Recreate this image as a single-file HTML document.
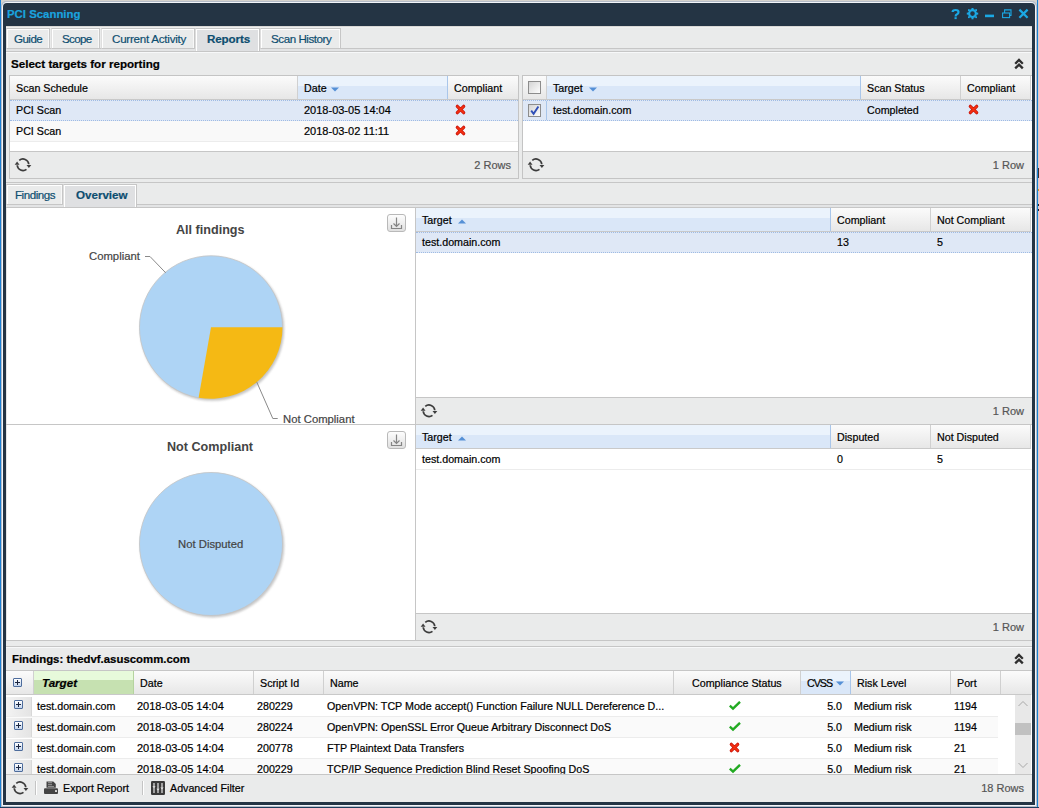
<!DOCTYPE html>
<html><head><meta charset="utf-8">
<style>
*{box-sizing:border-box;margin:0;padding:0}
html,body{width:1039px;height:808px;overflow:hidden;background:#d8d6d2;font-family:"Liberation Sans",sans-serif;font-size:10.7px;color:#000;-webkit-text-stroke:0.2px currentColor}
.a{position:absolute}
.t{position:absolute;white-space:nowrap;line-height:13px}
.tab{position:absolute;background:#eaebeb;border:1px solid #c6c6c6;border-bottom:none;box-shadow:inset 1px 1px 0 #fff,inset -1px 0 0 #f8f8f8;border-left-color:#dedede;color:#0d4e70;font-size:11px}
.tab span{position:absolute;top:3px;white-space:nowrap;line-height:13px;font-size:11.6px}
.tab.act{background:#dfe0e2;font-weight:bold;box-shadow:inset 1px 1px 0 #fff,inset -1px 0 0 #fff}
.hc{position:absolute;height:24px;background:linear-gradient(#fbfbfb,#e6e6e6)}
.hc span{position:absolute;top:6px;white-space:nowrap;line-height:13px}
.hc.sort{background:linear-gradient(#ebf3fc 0,#ebf3fc 42%,#dae7f8 42%,#dae7f8 100%)}
.vb{position:absolute;width:1px;background:#d0d0d0}
.vbs{position:absolute;width:1px;background:#a9c6ea}
.sel{position:absolute;background:#dfe8f6;border-top:1px dotted #9fbbe4;border-bottom:1px dotted #9fbbe4}
.ln{position:absolute;background:#c6c6c6}
.ftxt{position:absolute;white-space:nowrap;line-height:13px;color:#555;width:100px;text-align:right;font-size:11px}
</style></head><body>

<div class="a" style="left:0;top:0;width:1039px;height:808px;background:#d5d2cd"></div>
<div class="a" style="left:0;top:0;width:1px;height:808px;background:#1a7fd4"></div>
<div class="a" style="left:1037px;top:0;width:1px;height:808px;background:#1a7fd4"></div>
<div class="a" style="left:1px;top:1px;width:1036px;height:806px;background:#b4bcc8;border-radius:5px 5px 0 0"></div>
<div class="a" style="left:2px;top:2px;width:1034px;height:804px;background:#f2f5fa;border-radius:5px 5px 0 0"></div>
<div class="a" style="left:0;top:807px;width:1039px;height:1px;background:#1f3d5c"></div>
<div class="a" style="left:3px;top:3px;width:1032px;height:802px;background:#243444;border-radius:4px 4px 0 0"></div>
<div class="t" style="left:7px;top:8px;color:#1aa3df;font-weight:bold;font-size:11.4px">PCI Scanning</div>
<svg width="90" height="14" style="position:absolute;left:948px;top:7px" viewBox="0 0 90 14">
<g fill="none" stroke="#1ba8e4" stroke-width="2.2"><path d="M4.6 5Q4.6 3 7.6 3Q10.5 3 10.5 5Q10.5 6.5 9 7.2Q7.6 7.8 7.6 9.4"/></g>
<rect x="6.5" y="10.2" width="2.2" height="1.9" fill="#1ba8e4"/>
<g fill="none" stroke="#1ba8e4" stroke-width="2.2"><circle cx="24.5" cy="6.6" r="3.4"/></g>
<g fill="#1ba8e4"><rect x="23.5" y="1" width="2" height="2"/><rect x="23.5" y="10.3" width="2" height="2"/><rect x="18.8" y="5.6" width="2" height="2"/><rect x="28.2" y="5.6" width="2" height="2"/>
<rect x="20" y="2.2" width="1.8" height="1.8"/><rect x="27.2" y="2.2" width="1.8" height="1.8"/><rect x="20" y="9.3" width="1.8" height="1.8"/><rect x="27.2" y="9.3" width="1.8" height="1.8"/></g>
<rect x="37" y="7.6" width="9" height="2.6" fill="#1ba8e4"/>
<g fill="none" stroke="#1ba8e4" stroke-width="1.1"><rect x="54.6" y="6" width="7" height="4.6"/><path d="M56.6 6V2.9H63V8.4H61.6"/></g>
<g stroke="#1ba8e4" stroke-width="2.2"><path d="M71.4 2.6L79.6 10.8M79.6 2.6L71.4 10.8"/></g>
</svg>
<div class="a" style="left:6px;top:26px;width:1026px;height:776px;background:#eaebeb"></div>
<div class="a" style="left:6px;top:26px;width:1026px;height:1px;background:#d9d8d6"></div>
<div class="a" style="left:6px;top:27px;width:1026px;height:1px;background:#eff0f0"></div>
<div class="a" style="left:6px;top:48px;width:1026px;height:3px;background:#e3e4e5"></div>
<div class="ln" style="left:6px;top:48px;width:1026px;height:1px"></div>
<div class="ln" style="left:6px;top:51px;width:1026px;height:1px"></div>
<div class="a" style="left:6px;top:52px;width:1026px;height:1px;background:#f7f8f9"></div>
<div class="tab" style="left:6px;top:28px;width:44px;height:21px;border-bottom:1px solid #c6c6c6;border-left-color:#dedede;"><span style="left:7px;letter-spacing:-0.55px">Guide</span></div>
<div class="tab" style="left:51px;top:28px;width:49px;height:21px;border-bottom:1px solid #c6c6c6;"><span style="left:10px;letter-spacing:-0.7px">Scope</span></div>
<div class="tab" style="left:101px;top:28px;width:94px;height:21px;border-bottom:1px solid #c6c6c6;"><span style="left:10px;letter-spacing:-0.24px">Current Activity</span></div>
<div class="tab act" style="left:195px;top:28px;width:65px;height:23px;border-right:1px solid #c6c6c6"><span style="left:11px;letter-spacing:-0.1px">Reports</span></div>
<div class="tab" style="left:260px;top:28px;width:81px;height:21px;border-bottom:1px solid #c6c6c6;"><span style="left:10px;letter-spacing:-0.45px">Scan History</span></div>
<div class="t" style="left:11px;top:57px;font-weight:bold;font-size:11.6px">Select targets for reporting</div>
<svg width="11" height="12" viewBox="0 0 11 12" style="position:absolute;left:1014px;top:58px"><path d="M1.2 5.8L5 2L8.8 5.8M1.2 10.4L5 6.6L8.8 10.4" fill="none" stroke="#2e2e2e" stroke-width="2.3"/></svg>
<div class="a" style="left:9px;top:75px;width:510px;height:104px;border:1px solid #c4c4c4;background:#fff"></div>
<div class="hc" style="left:10px;top:76px;width:287px;"><span style="left:6px;">Scan Schedule</span></div>
<div class="hc sort" style="left:298px;top:76px;width:149px;"><span style="left:6px;">Date</span></div>
<div class="hc" style="left:448px;top:76px;width:70px;"><span style="left:6px;">Compliant</span></div>
<div class="a" style="left:297px;top:76px;width:1px;height:24px;background:#d0d0d0"></div>
<div class="a" style="left:447px;top:76px;width:1px;height:24px;background:#a9c6ea"></div>
<div class="a" style="left:10px;top:99px;width:508px;height:1px;background:#c9c9c9"></div>
<svg width="8" height="5" style="position:absolute;left:331px;top:87px"><path d="M0 0.5L8 0.5L4 4.5Z" fill="#5590d6"/></svg>
<div class="sel" style="left:10px;top:100px;width:508px;height:21px"></div>
<div class="a" style="left:10px;top:121px;width:508px;height:21px;background:#f9f9f9;border-bottom:1px solid #ececec"></div>
<div class="t" style="left:16px;top:104px">PCI Scan</div><div class="t" style="left:304px;top:104px;font-size:11px">2018-03-05 14:04</div>
<div class="t" style="left:16px;top:125px">PCI Scan</div><div class="t" style="left:304px;top:125px;font-size:11px">2018-03-02 11:11</div>
<svg width="11" height="11" viewBox="0 0 11 11" style="position:absolute;left:455px;top:104px"><path d="M2.3 2.3L8.7 8.7M8.7 2.3L2.3 8.7" stroke="#c8140c" stroke-width="3.2" stroke-linecap="round"/><path d="M2.3 2.3L8.7 8.7M8.7 2.3L2.3 8.7" stroke="#f43010" stroke-width="1.7" stroke-linecap="round"/></svg>
<svg width="11" height="11" viewBox="0 0 11 11" style="position:absolute;left:455px;top:125px"><path d="M2.3 2.3L8.7 8.7M8.7 2.3L2.3 8.7" stroke="#c8140c" stroke-width="3.2" stroke-linecap="round"/><path d="M2.3 2.3L8.7 8.7M8.7 2.3L2.3 8.7" stroke="#f43010" stroke-width="1.7" stroke-linecap="round"/></svg>
<div class="a" style="left:10px;top:151px;width:508px;height:27px;background:#eaebeb;border-top:1px solid #c6c6c6"></div>
<svg width="22" height="20" viewBox="0 0 22 20" style="position:absolute;left:12px;top:155px"><path d="M7.27 5.36A5.8 5.8 0 0 1 16.78 9.3" fill="none" stroke="#3c3c3c" stroke-width="1.7"/><path d="M14.5 9.9L19.3 9.9L16.9 13.1Z" fill="#3c3c3c"/><path d="M14.49 14.43A5.8 5.8 0 0 1 5.22 10.3" fill="none" stroke="#3c3c3c" stroke-width="1.7"/><path d="M2.7 9.7L7.5 9.7L5.1 6.5Z" fill="#3c3c3c"/></svg>
<div class="ftxt" style="left:411px;top:159px">2 Rows</div>
<div class="a" style="left:522px;top:75px;width:510px;height:104px;border:1px solid #c4c4c4;background:#fff"></div>
<div class="a" style="left:1031px;top:76px;width:1px;height:102px;background:#fff"></div>
<div class="hc" style="left:523px;top:76px;width:23px;"></div>
<div class="hc sort" style="left:547px;top:76px;width:313px;"><span style="left:6px;">Target</span></div>
<div class="hc" style="left:861px;top:76px;width:99px;"><span style="left:6px;">Scan Status</span></div>
<div class="hc" style="left:961px;top:76px;width:69px;"><span style="left:6px;">Compliant</span></div>
<div class="a" style="left:546px;top:76px;width:1px;height:24px;background:#d0d0d0"></div>
<div class="a" style="left:860px;top:76px;width:1px;height:24px;background:#a9c6ea"></div>
<div class="a" style="left:960px;top:76px;width:1px;height:24px;background:#d0d0d0"></div>
<div class="a" style="left:1030px;top:76px;width:1px;height:24px;background:#d0d0d0"></div>
<div class="a" style="left:523px;top:99px;width:508px;height:1px;background:#c9c9c9"></div>
<svg width="8" height="5" style="position:absolute;left:589px;top:87px"><path d="M0 0.5L8 0.5L4 4.5Z" fill="#5590d6"/></svg>
<div class="a" style="left:528px;top:81px;width:13px;height:13px;border:1px solid #8c8c8c;background:linear-gradient(135deg,#d4d4d4,#fdfdfd)"></div>
<div class="sel" style="left:523px;top:100px;width:509px;height:21px"></div>
<div class="a" style="left:546px;top:101px;width:1px;height:19px;background:#a9c6ea"></div>
<div class="a" style="left:528px;top:104px;width:13px;height:13px;border:1px solid #8c8c8c;background:linear-gradient(135deg,#d4d4d4,#fdfdfd)"></div>
<svg width="11" height="11" style="position:absolute;left:529px;top:105px"><path d="M2.2 5.6L4.6 8.8L9.4 1.4" fill="none" stroke="#3050b8" stroke-width="1.9"/></svg>
<div class="t" style="left:553px;top:104px">test.domain.com</div><div class="t" style="left:867px;top:104px">Completed</div>
<svg width="11" height="11" viewBox="0 0 11 11" style="position:absolute;left:968px;top:104px"><path d="M2.3 2.3L8.7 8.7M8.7 2.3L2.3 8.7" stroke="#c8140c" stroke-width="3.2" stroke-linecap="round"/><path d="M2.3 2.3L8.7 8.7M8.7 2.3L2.3 8.7" stroke="#f43010" stroke-width="1.7" stroke-linecap="round"/></svg>
<div class="a" style="left:523px;top:151px;width:509px;height:27px;background:#eaebeb;border-top:1px solid #c6c6c6"></div>
<svg width="22" height="20" viewBox="0 0 22 20" style="position:absolute;left:525px;top:155px"><path d="M7.27 5.36A5.8 5.8 0 0 1 16.78 9.3" fill="none" stroke="#3c3c3c" stroke-width="1.7"/><path d="M14.5 9.9L19.3 9.9L16.9 13.1Z" fill="#3c3c3c"/><path d="M14.49 14.43A5.8 5.8 0 0 1 5.22 10.3" fill="none" stroke="#3c3c3c" stroke-width="1.7"/><path d="M2.7 9.7L7.5 9.7L5.1 6.5Z" fill="#3c3c3c"/></svg>
<div class="ftxt" style="left:924px;top:159px">1 Row</div>
<div class="ln" style="left:6px;top:182px;width:1026px;height:1px"></div>
<div class="a" style="left:6px;top:204px;width:1026px;height:3px;background:#e3e4e5"></div>
<div class="ln" style="left:6px;top:204px;width:1026px;height:1px"></div>
<div class="ln" style="left:6px;top:207px;width:1026px;height:1px"></div>
<div class="a" style="left:6px;top:208px;width:1026px;height:1px;background:#f7f8f9"></div>
<div class="tab" style="left:6px;top:184px;width:57px;height:21px;border-bottom:1px solid #c6c6c6;border-left-color:#dedede;"><span style="left:8px;letter-spacing:-0.48px">Findings</span></div>
<div class="tab act" style="left:63px;top:184px;width:74px;height:23px;border-right:1px solid #c6c6c6"><span style="left:12px;letter-spacing:0px">Overview</span></div>
<div class="a" style="left:6px;top:208px;width:1026px;height:433px;background:#fff;border-bottom:1px solid #c6c6c6"></div>
<div class="ln" style="left:415px;top:208px;width:1px;height:432px"></div>
<div class="a" style="left:6px;top:208px;width:1px;height:432px;background:#e6e6e6"></div>
<div class="ln" style="left:6px;top:424px;width:409px;height:1px"></div>
<div class="a" style="left:387px;top:214px;width:19px;height:18px;border:1px solid #b9b9b9;border-radius:3px;background:linear-gradient(#fdfdfd,#e0e0e0)"><svg width="17" height="16" style="position:absolute;left:0;top:0"><path d="M8.5 2.5V11.5M5.5 8.5L8.5 11.5L11.5 8.5M3.5 10V13.5H13.5V10" fill="none" stroke="#858585" stroke-width="1.2"/></svg></div>
<div class="t" style="left:176px;top:224px;font-weight:bold;font-size:12.6px;color:#444;-webkit-text-stroke:0">All findings</div>
<svg width="409" height="216" style="position:absolute;left:6px;top:208px">
<defs><filter id="sh" x="-10%" y="-10%" width="130%" height="130%"><feGaussianBlur stdDeviation="1.3"/></filter></defs>
<circle cx="206.2" cy="120.8" r="72" fill="#9a9a9a" filter="url(#sh)" opacity="0.55"/>
<circle cx="205" cy="119.3" r="71.5" fill="#aed4f5" stroke="#c4c4c4" stroke-width="0.8"/>
<path d="M205 119.3L276.5 119.3A71.5 71.5 0 0 1 192.6 189.7Z" fill="#f5b914"/>
<path d="M139 48.5L144 48.5L159.7 64.8" fill="none" stroke="#8a8a8a" stroke-width="1"/>
<path d="M250.7 173.9L266.8 210.5L271.7 210.5" fill="none" stroke="#8a8a8a" stroke-width="1"/>
</svg>
<div class="t" style="left:89px;top:250px;color:#444;font-size:11.3px">Compliant</div>
<div class="t" style="left:283px;top:413px;color:#444;font-size:11.3px">Not Compliant</div>
<div class="a" style="left:387px;top:431px;width:19px;height:18px;border:1px solid #b9b9b9;border-radius:3px;background:linear-gradient(#fdfdfd,#e0e0e0)"><svg width="17" height="16" style="position:absolute;left:0;top:0"><path d="M8.5 2.5V11.5M5.5 8.5L8.5 11.5L11.5 8.5M3.5 10V13.5H13.5V10" fill="none" stroke="#858585" stroke-width="1.2"/></svg></div>
<div class="t" style="left:167px;top:441px;font-weight:bold;font-size:12.6px;color:#444;-webkit-text-stroke:0">Not Compliant</div>
<svg width="409" height="215" style="position:absolute;left:6px;top:425px">
<circle cx="206.2" cy="120.5" r="72" fill="#9a9a9a" filter="url(#sh)" opacity="0.55"/>
<circle cx="205" cy="119" r="71.5" fill="#aed4f5" stroke="#c4c4c4" stroke-width="0.8"/>
</svg>
<div class="t" style="left:178px;top:538px;color:#444;font-size:11.3px">Not Disputed</div>
<div class="hc sort" style="left:416px;top:208px;width:414px;"><span style="left:6px;">Target</span></div>
<div class="hc" style="left:831px;top:208px;width:99px;"><span style="left:6px;">Compliant</span></div>
<div class="hc" style="left:931px;top:208px;width:99px;"><span style="left:6px;">Not Compliant</span></div>
<div class="a" style="left:830px;top:208px;width:1px;height:24px;background:#a9c6ea"></div>
<div class="a" style="left:930px;top:208px;width:1px;height:24px;background:#d0d0d0"></div>
<div class="a" style="left:1030px;top:208px;width:1px;height:24px;background:#d0d0d0"></div>
<div class="a" style="left:416px;top:231px;width:615px;height:1px;background:#c9c9c9"></div>
<svg width="8" height="5" style="position:absolute;left:458px;top:219px"><path d="M0 4.5L8 4.5L4 0.5Z" fill="#5590d6"/></svg>
<div class="a" style="left:1031px;top:208px;width:1px;height:24px;background:#fff"></div>
<div class="sel" style="left:416px;top:232px;width:616px;height:21px"></div>
<div class="t" style="left:422px;top:236px">test.domain.com</div><div class="t" style="left:837px;top:236px">13</div><div class="t" style="left:937px;top:236px">5</div>
<div class="a" style="left:416px;top:397px;width:616px;height:28px;background:#eaebeb;border-top:1px solid #c6c6c6;border-bottom:1px solid #c6c6c6"></div>
<svg width="22" height="20" viewBox="0 0 22 20" style="position:absolute;left:418px;top:401px"><path d="M7.27 5.36A5.8 5.8 0 0 1 16.78 9.3" fill="none" stroke="#3c3c3c" stroke-width="1.7"/><path d="M14.5 9.9L19.3 9.9L16.9 13.1Z" fill="#3c3c3c"/><path d="M14.49 14.43A5.8 5.8 0 0 1 5.22 10.3" fill="none" stroke="#3c3c3c" stroke-width="1.7"/><path d="M2.7 9.7L7.5 9.7L5.1 6.5Z" fill="#3c3c3c"/></svg>
<div class="ftxt" style="left:924px;top:405px">1 Row</div>
<div class="hc sort" style="left:416px;top:425px;width:414px;"><span style="left:6px;">Target</span></div>
<div class="hc" style="left:831px;top:425px;width:99px;"><span style="left:6px;">Disputed</span></div>
<div class="hc" style="left:931px;top:425px;width:99px;"><span style="left:6px;">Not Disputed</span></div>
<div class="a" style="left:830px;top:425px;width:1px;height:24px;background:#a9c6ea"></div>
<div class="a" style="left:930px;top:425px;width:1px;height:24px;background:#d0d0d0"></div>
<div class="a" style="left:1030px;top:425px;width:1px;height:24px;background:#d0d0d0"></div>
<div class="a" style="left:416px;top:448px;width:615px;height:1px;background:#c9c9c9"></div>
<svg width="8" height="5" style="position:absolute;left:458px;top:436px"><path d="M0 4.5L8 4.5L4 0.5Z" fill="#5590d6"/></svg>
<div class="a" style="left:416px;top:449px;width:616px;height:21px;background:#fff;border-bottom:1px solid #ececec"></div>
<div class="t" style="left:422px;top:453px">test.domain.com</div><div class="t" style="left:837px;top:453px">0</div><div class="t" style="left:937px;top:453px">5</div>
<div class="a" style="left:416px;top:613px;width:616px;height:28px;background:#eaebeb;border-top:1px solid #c6c6c6;border-bottom:1px solid #c6c6c6"></div>
<svg width="22" height="20" viewBox="0 0 22 20" style="position:absolute;left:418px;top:617px"><path d="M7.27 5.36A5.8 5.8 0 0 1 16.78 9.3" fill="none" stroke="#3c3c3c" stroke-width="1.7"/><path d="M14.5 9.9L19.3 9.9L16.9 13.1Z" fill="#3c3c3c"/><path d="M14.49 14.43A5.8 5.8 0 0 1 5.22 10.3" fill="none" stroke="#3c3c3c" stroke-width="1.7"/><path d="M2.7 9.7L7.5 9.7L5.1 6.5Z" fill="#3c3c3c"/></svg>
<div class="ftxt" style="left:924px;top:621px">1 Row</div>
<div class="ln" style="left:6px;top:646px;width:1026px;height:1px"></div>
<div class="a" style="left:6px;top:647px;width:1026px;height:1px;background:#f7f8f9"></div>
<div class="t" style="left:12px;top:653px;font-weight:bold;font-size:11.4px">Findings: thedvf.asuscomm.com</div>
<svg width="11" height="12" viewBox="0 0 11 12" style="position:absolute;left:1014px;top:653px"><path d="M1.2 5.8L5 2L8.8 5.8M1.2 10.4L5 6.6L8.8 10.4" fill="none" stroke="#2e2e2e" stroke-width="2.3"/></svg>
<div class="ln" style="left:6px;top:670px;width:1026px;height:1px"></div>
<div class="hc" style="left:6px;top:671px;width:27px;"></div>
<div class="hc" style="left:34px;top:671px;width:99px;background:linear-gradient(#e7fadb 0,#e7fadb 38%,#c6e1b1 38%,#c6e1b1 100%);"><span style="left:8px;font-weight:bold;font-style:italic;font-size:11.6px;top:5px">Target</span></div>
<div class="hc" style="left:134px;top:671px;width:119px;"><span style="left:6px;">Date</span></div>
<div class="hc" style="left:254px;top:671px;width:69px;"><span style="left:6px;">Script Id</span></div>
<div class="hc" style="left:324px;top:671px;width:349px;"><span style="left:6px;">Name</span></div>
<div class="hc" style="left:674px;top:671px;width:126px;"><span style="left:18px;">Compliance Status</span></div>
<div class="hc sort" style="left:801px;top:671px;width:49px;"><span style="left:6px;letter-spacing:-1px">CVSS</span></div>
<div class="hc" style="left:851px;top:671px;width:99px;"><span style="left:6px;">Risk Level</span></div>
<div class="hc" style="left:951px;top:671px;width:49px;"><span style="left:6px;">Port</span></div>
<div class="hc" style="left:1001px;top:671px;width:30px;"></div>
<div class="a" style="left:33px;top:671px;width:1px;height:24px;background:#d0d0d0"></div>
<div class="a" style="left:133px;top:671px;width:1px;height:24px;background:#b5d39f"></div>
<div class="a" style="left:253px;top:671px;width:1px;height:24px;background:#d0d0d0"></div>
<div class="a" style="left:323px;top:671px;width:1px;height:24px;background:#d0d0d0"></div>
<div class="a" style="left:673px;top:671px;width:1px;height:24px;background:#d0d0d0"></div>
<div class="a" style="left:800px;top:671px;width:1px;height:24px;background:#d0d0d0"></div>
<div class="a" style="left:850px;top:671px;width:1px;height:24px;background:#a9c6ea"></div>
<div class="a" style="left:950px;top:671px;width:1px;height:24px;background:#d0d0d0"></div>
<div class="a" style="left:1000px;top:671px;width:1px;height:24px;background:#d0d0d0"></div>
<div class="a" style="left:6px;top:694px;width:1025px;height:1px;background:#c9c9c9"></div>
<svg width="8" height="5" style="position:absolute;left:836px;top:681px"><path d="M0 0.5L8 0.5L4 4.5Z" fill="#5590d6"/></svg>
<div class="a" style="left:13px;top:678px;width:9px;height:9px;border:1px solid #4d6c9c;border-radius:1px;background:linear-gradient(#ffffff,#c3d4ec)"><div style="position:absolute;left:3px;top:1px;width:1px;height:5px;background:#1a2540"></div><div style="position:absolute;left:1px;top:3px;width:5px;height:1px;background:#1a2540"></div></div>
<div class="a" style="left:6px;top:695px;width:1026px;height:79px;background:#fff"></div>
<div class="a" style="left:6px;top:696px;width:1026px;height:78px;overflow:hidden">
<div class="a" style="left:0;top:0px;width:992px;height:21px;background:#fff;border-bottom:1px solid #ececec"></div>
<div class="a" style="left:0;top:1px;width:26px;height:19px;background:linear-gradient(90deg,#f3f3f3,#e4e4e4);border-right:1px solid #d8d8d8"></div>
<div class="a" style="left:8px;top:4px;width:9px;height:9px;border:1px solid #4d6c9c;border-radius:1px;background:linear-gradient(#ffffff,#c3d4ec)"><div style="position:absolute;left:3px;top:1px;width:1px;height:5px;background:#1a2540"></div><div style="position:absolute;left:1px;top:3px;width:5px;height:1px;background:#1a2540"></div></div>
<div class="t" style="left:31px;top:4px">test.domain.com</div>
<div class="t" style="left:131px;top:4px;font-size:11px">2018-03-05 14:04</div>
<div class="t" style="left:251px;top:4px">280229</div>
<div class="t" style="left:321px;top:4px">OpenVPN: TCP Mode accept() Function Failure NULL Dereference D...</div>
<svg width="12" height="10" viewBox="0 0 12 10" style="position:absolute;left:723px;top:5px"><path d="M0.8 4.6L4 7.6L11 0.8" fill="none" stroke="#22aa22" stroke-width="2.4"/></svg>
<div class="t" style="left:795px;top:4px;width:41px;text-align:right">5.0</div>
<div class="t" style="left:848px;top:4px">Medium risk</div>
<div class="t" style="left:948px;top:4px">1194</div>
<div class="a" style="left:0;top:21px;width:992px;height:21px;background:#fafafa;border-bottom:1px solid #ececec"></div>
<div class="a" style="left:0;top:22px;width:26px;height:19px;background:linear-gradient(90deg,#f3f3f3,#e4e4e4);border-right:1px solid #d8d8d8"></div>
<div class="a" style="left:8px;top:25px;width:9px;height:9px;border:1px solid #4d6c9c;border-radius:1px;background:linear-gradient(#ffffff,#c3d4ec)"><div style="position:absolute;left:3px;top:1px;width:1px;height:5px;background:#1a2540"></div><div style="position:absolute;left:1px;top:3px;width:5px;height:1px;background:#1a2540"></div></div>
<div class="t" style="left:31px;top:25px">test.domain.com</div>
<div class="t" style="left:131px;top:25px;font-size:11px">2018-03-05 14:04</div>
<div class="t" style="left:251px;top:25px">280224</div>
<div class="t" style="left:321px;top:25px">OpenVPN: OpenSSL Error Queue Arbitrary Disconnect DoS</div>
<svg width="12" height="10" viewBox="0 0 12 10" style="position:absolute;left:723px;top:26px"><path d="M0.8 4.6L4 7.6L11 0.8" fill="none" stroke="#22aa22" stroke-width="2.4"/></svg>
<div class="t" style="left:795px;top:25px;width:41px;text-align:right">5.0</div>
<div class="t" style="left:848px;top:25px">Medium risk</div>
<div class="t" style="left:948px;top:25px">1194</div>
<div class="a" style="left:0;top:42px;width:992px;height:21px;background:#fff;border-bottom:1px solid #ececec"></div>
<div class="a" style="left:0;top:43px;width:26px;height:19px;background:linear-gradient(90deg,#f3f3f3,#e4e4e4);border-right:1px solid #d8d8d8"></div>
<div class="a" style="left:8px;top:46px;width:9px;height:9px;border:1px solid #4d6c9c;border-radius:1px;background:linear-gradient(#ffffff,#c3d4ec)"><div style="position:absolute;left:3px;top:1px;width:1px;height:5px;background:#1a2540"></div><div style="position:absolute;left:1px;top:3px;width:5px;height:1px;background:#1a2540"></div></div>
<div class="t" style="left:31px;top:46px">test.domain.com</div>
<div class="t" style="left:131px;top:46px;font-size:11px">2018-03-05 14:04</div>
<div class="t" style="left:251px;top:46px">200778</div>
<div class="t" style="left:321px;top:46px">FTP Plaintext Data Transfers</div>
<svg width="11" height="11" viewBox="0 0 11 11" style="position:absolute;left:723px;top:46px"><path d="M2.3 2.3L8.7 8.7M8.7 2.3L2.3 8.7" stroke="#c8140c" stroke-width="3.2" stroke-linecap="round"/><path d="M2.3 2.3L8.7 8.7M8.7 2.3L2.3 8.7" stroke="#f43010" stroke-width="1.7" stroke-linecap="round"/></svg>
<div class="t" style="left:795px;top:46px;width:41px;text-align:right">5.0</div>
<div class="t" style="left:848px;top:46px">Medium risk</div>
<div class="t" style="left:948px;top:46px">21</div>
<div class="a" style="left:0;top:63px;width:992px;height:21px;background:#fafafa;border-bottom:1px solid #ececec"></div>
<div class="a" style="left:0;top:64px;width:26px;height:19px;background:linear-gradient(90deg,#f3f3f3,#e4e4e4);border-right:1px solid #d8d8d8"></div>
<div class="a" style="left:8px;top:67px;width:9px;height:9px;border:1px solid #4d6c9c;border-radius:1px;background:linear-gradient(#ffffff,#c3d4ec)"><div style="position:absolute;left:3px;top:1px;width:1px;height:5px;background:#1a2540"></div><div style="position:absolute;left:1px;top:3px;width:5px;height:1px;background:#1a2540"></div></div>
<div class="t" style="left:31px;top:67px">test.domain.com</div>
<div class="t" style="left:131px;top:67px;font-size:11px">2018-03-05 14:04</div>
<div class="t" style="left:251px;top:67px">200229</div>
<div class="t" style="left:321px;top:67px">TCP/IP Sequence Prediction Blind Reset Spoofing DoS</div>
<svg width="12" height="10" viewBox="0 0 12 10" style="position:absolute;left:723px;top:68px"><path d="M0.8 4.6L4 7.6L11 0.8" fill="none" stroke="#22aa22" stroke-width="2.4"/></svg>
<div class="t" style="left:795px;top:67px;width:41px;text-align:right">5.0</div>
<div class="t" style="left:848px;top:67px">Medium risk</div>
<div class="t" style="left:948px;top:67px">21</div>
</div>
<div class="a" style="left:1015px;top:695px;width:16px;height:79px;background:#e8e8e8"></div>
<svg width="16" height="79" style="position:absolute;left:1015px;top:695px"><path d="M3.5 11L8 6.5L12.5 11" fill="none" stroke="#a9a9a9" stroke-width="1"/><rect x="0" y="28" width="16" height="12" fill="#c1c1c1"/><path d="M3.5 68L8 72.5L12.5 68" fill="none" stroke="#a9a9a9" stroke-width="1"/></svg>
<div class="a" style="left:6px;top:774px;width:1026px;height:28px;background:#eaebeb;border-top:1px solid #c6c6c6"></div>
<svg width="22" height="20" viewBox="0 0 22 20" style="position:absolute;left:9px;top:778px"><path d="M7.27 5.36A5.8 5.8 0 0 1 16.78 9.3" fill="none" stroke="#3c3c3c" stroke-width="1.7"/><path d="M14.5 9.9L19.3 9.9L16.9 13.1Z" fill="#3c3c3c"/><path d="M14.49 14.43A5.8 5.8 0 0 1 5.22 10.3" fill="none" stroke="#3c3c3c" stroke-width="1.7"/><path d="M2.7 9.7L7.5 9.7L5.1 6.5Z" fill="#3c3c3c"/></svg>
<div class="a" style="left:35px;top:781px;width:1px;height:14px;background:#c4c4c4;box-shadow:1px 0 0 #fff"></div>
<svg width="15" height="14" viewBox="0 0 15 14" style="position:absolute;left:44px;top:781px"><path d="M2.5 0.5H9.3L11.8 3V6.8H2.5Z" fill="#444"/><rect x="4" y="1.2" width="4" height="1" fill="#9a9a9a"/><rect x="4" y="3.2" width="4" height="1" fill="#9a9a9a"/><rect x="4" y="5.1" width="6" height="1" fill="#9a9a9a"/><rect x="0" y="7.2" width="14" height="5.8" rx="1" fill="#444"/><rect x="11" y="9.2" width="2" height="1.7" fill="#e8e8e8"/></svg>
<div class="t" style="left:63px;top:782px">Export Report</div>
<div class="a" style="left:142px;top:781px;width:1px;height:14px;background:#c4c4c4;box-shadow:1px 0 0 #fff"></div>
<svg width="14" height="14" viewBox="0 0 14 14" style="position:absolute;left:151px;top:781px"><rect x="0" y="0" width="14" height="14" rx="1.2" fill="#3a3a3a"/><g stroke="#e6e6e6" stroke-width="1.2"><path d="M3 2V12M7 2V12M11 2V12"/></g><g fill="#e6e6e6"><path d="M1.4 5.2H4.6L3 7Z"/><path d="M5.4 7.8H8.6L7 9.6Z"/><path d="M9.4 6.6H12.6L11 8.4Z"/></g></svg>
<div class="t" style="left:170px;top:782px">Advanced Filter</div>
<div class="ftxt" style="left:924px;top:782px">18 Rows</div>
<div class="a" style="left:1038px;top:168px;width:1px;height:10px;background:#333"></div>
<div class="a" style="left:1038px;top:189px;width:1px;height:2px;background:#d9a020"></div>
<div class="a" style="left:1038px;top:204px;width:1px;height:2px;background:#222"></div>
<div class="a" style="left:1038px;top:209px;width:1px;height:2px;background:#222"></div>
</body></html>
